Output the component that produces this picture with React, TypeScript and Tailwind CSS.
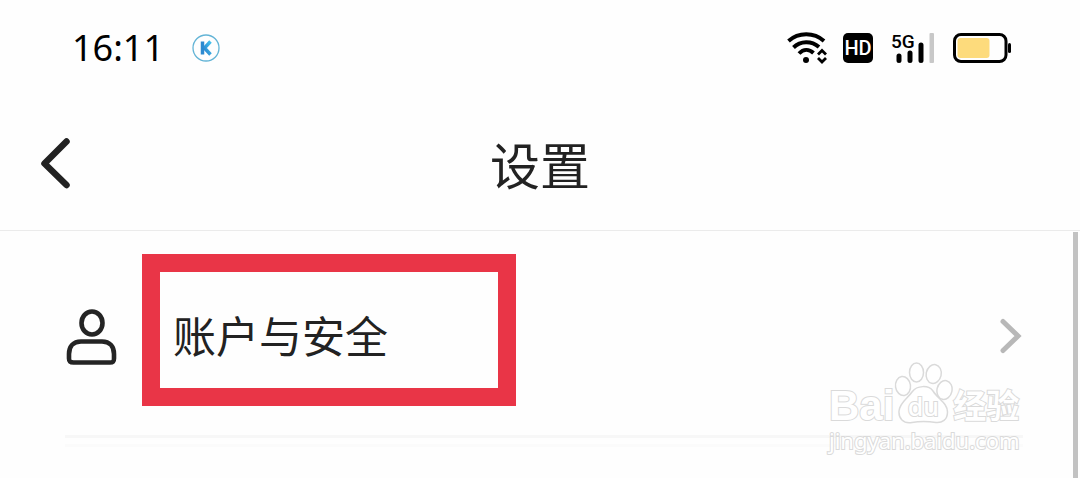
import React from "react";

function WifiIcon() {
  return (
    <svg className="h-8 w-10" viewBox="0 0 40 32" fill="none" stroke="#000" strokeWidth="3.9" aria-label="Wi-Fi">
      <path d="M1.500 9C11.500 0 27 0 37 9" />
      <path d="M6.500 15.500C13.500 8.500 24.500 8.500 32 15" />
      <path d="M12 21.500C16.500 16.800 22 16.800 26.500 21" />
      <circle cx="19" cy="28" r="3" fill="#000" stroke="none" />
      <path d="M31 22.500L35 18.500L39 22.500M31 26L35 30L39 26" strokeWidth="2.800" />
    </svg>
  );
}

function SignalIcon() {
  return (
    <div className="relative h-8 w-11" aria-label="5G">
      <span className="absolute -top-1 left-0 font-['Roboto',sans-serif] text-[19px] leading-7 font-medium">5G</span>
      <svg className="h-8 w-11" viewBox="0 0 44 32" strokeLinecap="round" strokeWidth="5">
        <path d="M8 24V28.500M19 21V28.500M30 13V28.500" stroke="#000" />
        <rect x="38.500" y="1" width="4.500" height="30" rx="1" fill="#c8c8c8" />
      </svg>
    </div>
  );
}

function BatteryIcon() {
  return (
    <svg className="h-8 w-15" viewBox="0 0 60 32" aria-label="Battery">
      <rect x="1.500" y="2.500" width="51.500" height="27" rx="6.500" fill="none" stroke="#000" strokeWidth="3" />
      <rect x="4.500" y="6" width="32" height="20" rx="3" fill="#fddb7c" />
      <rect x="55" y="11" width="3" height="10" rx="1.500" fill="#000" />
    </svg>
  );
}

function StatusBar() {
  return (
    <div className="flex h-24 items-center justify-between pr-[67px] pl-[72px] text-black">
      <div className="flex items-center gap-7">
        <time className="font-['Noto_Sans',sans-serif] text-[36px] leading-12">16:11</time>
        <svg className="h-7 w-7" viewBox="0 0 28 28" aria-label="K">
          <defs>
            <linearGradient id="blue" x1="0" x2="1" y1="1" y2="0">
              <stop stopColor="#2680cc" />
              <stop offset="1" stopColor="#46c2ee" />
            </linearGradient>
          </defs>
          <circle cx="14" cy="14" r="13" fill="none" stroke="#63b4d6" strokeWidth="1.300" />
          <path d="M10.500 7.500V20.500" fill="none" stroke="#2c8ad0" strokeWidth="3.500" />
          <path d="M18.500 7.500L12.500 14L18.500 20.500" fill="none" stroke="url(#blue)" strokeWidth="3.500" />
        </svg>
      </div>
      <div className="flex items-center">
        <WifiIcon />
        <span className="ml-4 flex h-[30px] w-[30px] items-center justify-center rounded-[5px] bg-black font-['Roboto',sans-serif] text-[20px] leading-none font-medium text-white">
          HD
        </span>
        <div className="ml-[18px]">
          <SignalIcon />
        </div>
        <div className="ml-[18px]">
          <BatteryIcon />
        </div>
      </div>
    </div>
  );
}

function Header() {
  return (
    <header className="grid h-[135px] grid-cols-[1fr_auto_1fr] items-center border-b border-[#ebebeb] px-9">
      <button type="button" aria-label="返回" className="h-15 w-10">
        <svg className="h-15 w-10" viewBox="0 0 40 60" fill="none" stroke="#222" strokeWidth="6.500" strokeLinecap="round" strokeLinejoin="round">
          <path d="M30.500 8.500L8.500 30.500L30.500 52" />
        </svg>
      </button>
      <h1 className="text-[50px] leading-15 font-normal text-[#222]">设置</h1>
    </header>
  );
}

const outline = "text-white [-webkit-text-stroke:2px_#dadada] [paint-order:stroke_fill]";

function Watermark() {
  return (
    <div className="pointer-events-none absolute right-[57px] bottom-[22px] w-[194px] font-['Noto_Sans',sans-serif]">
      <div className="flex items-end">
        <span className={`${outline} font-['Liberation_Sans',sans-serif] text-[42px] leading-9 font-bold`}>Bai</span>
        <span className="relative -ml-px h-[62px] w-[60px] shrink-0">
          <svg className="h-[62px] w-[60px]" viewBox="0 0 60 62" fill="#fff" stroke="#dadada" strokeWidth="1.500">
            <ellipse cx="10" cy="24" rx="7.500" ry="9.500" transform="rotate(-8 10 24)" />
            <ellipse cx="23.500" cy="10.500" rx="7" ry="9.500" />
            <ellipse cx="40.700" cy="12" rx="7.500" ry="9.500" transform="rotate(12 40.700 12)" />
            <ellipse cx="51.500" cy="28" rx="7.500" ry="9.500" transform="rotate(12 51.500 28)" />
            <path d="M19 30C24 23 36 23 40 29C45 37 54.500 41 54.500 50C54.500 58 49 61 43 60.500C34 59 27 59 19 60.500C10 62 5.500 56 6 49C6.500 41 14 37 19 30Z" />
          </svg>
          <span className={`${outline} absolute inset-x-0 bottom-1 text-center text-[25px] leading-7 font-medium`}>du</span>
        </span>
        <span className={`${outline} font-['Noto_Sans_CJK_SC',sans-serif] text-[33px] leading-10 font-bold`}>经验</span>
      </div>
      <div className={`${outline} text-[22px] leading-8`}>jingyan.baidu.com</div>
    </div>
  );
}

export default function App() {
  return (
    <div className="relative overflow-hidden bg-[#fefefe] font-['Noto_Sans_CJK_SC',sans-serif]">
      <StatusBar />
      <Header />
      <main className="flex pt-px pr-[2px]">
        <div className="h-[246px] grow pr-[50px] pl-[65px]">
          <button type="button" className="flex h-[206px] w-full items-center border-b-3 border-[#f7f7f7] pt-1 text-left">
            <svg className="h-15 w-[52px] shrink-0" viewBox="0 0 52 60" fill="none" stroke="#242424" strokeWidth="4.600">
              <ellipse cx="27" cy="17" rx="10.500" ry="11.500" />
              <path d="M16 35.500H37C45 35.500 49 41 49 48V52.500C49 55.500 48 56.500 45 56.500H8.500C5.500 56.500 4 55.500 4 52.500V48C4 41 8 35.500 16 35.500Z" />
            </svg>
            <span className="mb-3 ml-[25px] flex h-[152px] w-[374px] shrink-0 items-center border-18 border-[#e93547] bg-[#fefefe] pt-[10px] pl-[13px] text-[43px] leading-none text-[#222]">
              账户与安全
            </span>
            <svg className="ml-auto h-10 w-6 shrink-0" viewBox="0 0 24 40" fill="none" stroke="#b8b8b8" strokeWidth="5" strokeLinecap="round" strokeLinejoin="miter">
              <path d="M4 5.500L19 20L4 34.500" />
            </svg>
          </button>
          <div className="mt-[6px] h-[3px] bg-[#fbfbfb]" />
        </div>
        <div className="w-[5px] bg-[#c2c2c2]" />
      </main>
      <Watermark />
    </div>
  );
}
